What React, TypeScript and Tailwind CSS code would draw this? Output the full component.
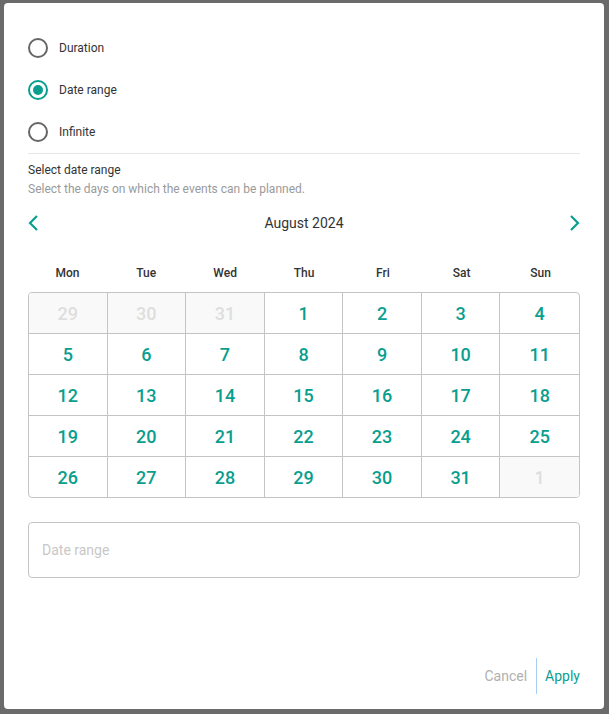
import React from "react";

const TEAL = "text-[#0a9e8e]";

function Radio({ label, checked }: { label: string; checked?: boolean }) {
  return (
    <div className="flex h-[42px] items-center">
      <div
        className={
          "flex h-[20px] w-[20px] items-center justify-center rounded-full border-2 " +
          (checked ? "border-[#0a9e8e]" : "border-[#666666]")
        }
      >
        {checked && <div className="h-[10px] w-[10px] rounded-full bg-[#0a9e8e]" />}
      </div>
      <span className="ml-[11px] text-[12px] text-[#333333]">{label}</span>
    </div>
  );
}

const days: { n: number; dim?: boolean }[] = [
  { n: 29, dim: true },
  { n: 30, dim: true },
  { n: 31, dim: true },
  ...Array.from({ length: 31 }, (_, i) => ({ n: i + 1 })),
  { n: 1, dim: true },
];

export default function App() {
  return (
    <div
      className="flex h-[714px] w-[609px] bg-[#6b6b6b] pl-[4px] pt-[3px]"
      style={{ fontFamily: "Roboto, 'Liberation Sans', sans-serif" }}
    >
      <div className="flex h-[706px] w-[600px] flex-col rounded-[4px] bg-white px-6 pt-[24px]">
        <Radio label="Duration" />
        <Radio label="Date range" checked />
        <Radio label="Infinite" />
        <div className="h-px bg-[#e6e6e6]" />
        <div className="mt-[8px] text-[12px] leading-[16px] text-[#333333]">Select date range</div>
        <div className="mt-[3px] text-[12px] leading-[16px] text-[#9a9a9a]">
          Select the days on which the events can be planned.
        </div>
        <div className="mt-[14px] flex h-[24px] items-center justify-between">
          <svg width="14" height="18" viewBox="0 0 14 18" className="-ml-[1px]">
            <path d="M10 2 L3 9 L10 16" fill="none" stroke="#0a9e8e" strokeWidth="2.2" />
          </svg>
          <span className="text-[14px] text-[#333333]">August 2024</span>
          <svg width="14" height="18" viewBox="0 0 14 18" className="-mr-[1px]">
            <path d="M4 2 L11 9 L4 16" fill="none" stroke="#0a9e8e" strokeWidth="2.2" />
          </svg>
        </div>
        <div className="mt-[30px] grid grid-cols-7">
          {["Mon", "Tue", "Wed", "Thu", "Fri", "Sat", "Sun"].map((d) => (
            <div key={d} className="text-center text-[12px] font-medium leading-[16px] text-[#333333]">
              {d}
            </div>
          ))}
        </div>
        <div className="mt-[11px] grid grid-cols-7 overflow-hidden rounded-[4px] border border-[#c4c4c4]">
          {days.map((d, i) => (
            <div
              key={i}
              className={
                "flex items-center justify-center text-[18px] font-medium " +
                (i < 28 ? "h-[41px] border-b border-[#c4c4c4] " : "h-[40px] ") +
                (i % 7 !== 6 ? "border-r border-[#c4c4c4] " : "") +
                (d.dim ? "bg-[#f9f9f9] text-[#dedede]" : TEAL)
              }
            >
              {d.n}
            </div>
          ))}
        </div>
        <div className="mt-[24px] flex h-[56px] items-center rounded-[4px] border border-[#c4c4c4] px-[13px]">
          <span className="text-[14px] text-[#c8c8c8]">Date range</span>
        </div>
        <div className="mt-auto mb-[15px] flex items-center justify-end">
          <span className="text-[14px] text-[#b0b0b0]">Cancel</span>
          <div className="ml-[9px] mr-[8px] h-[36px] w-px bg-[#a8cdee]" />
          <span className={"text-[14px] " + TEAL}>Apply</span>
        </div>
      </div>
    </div>
  );
}
